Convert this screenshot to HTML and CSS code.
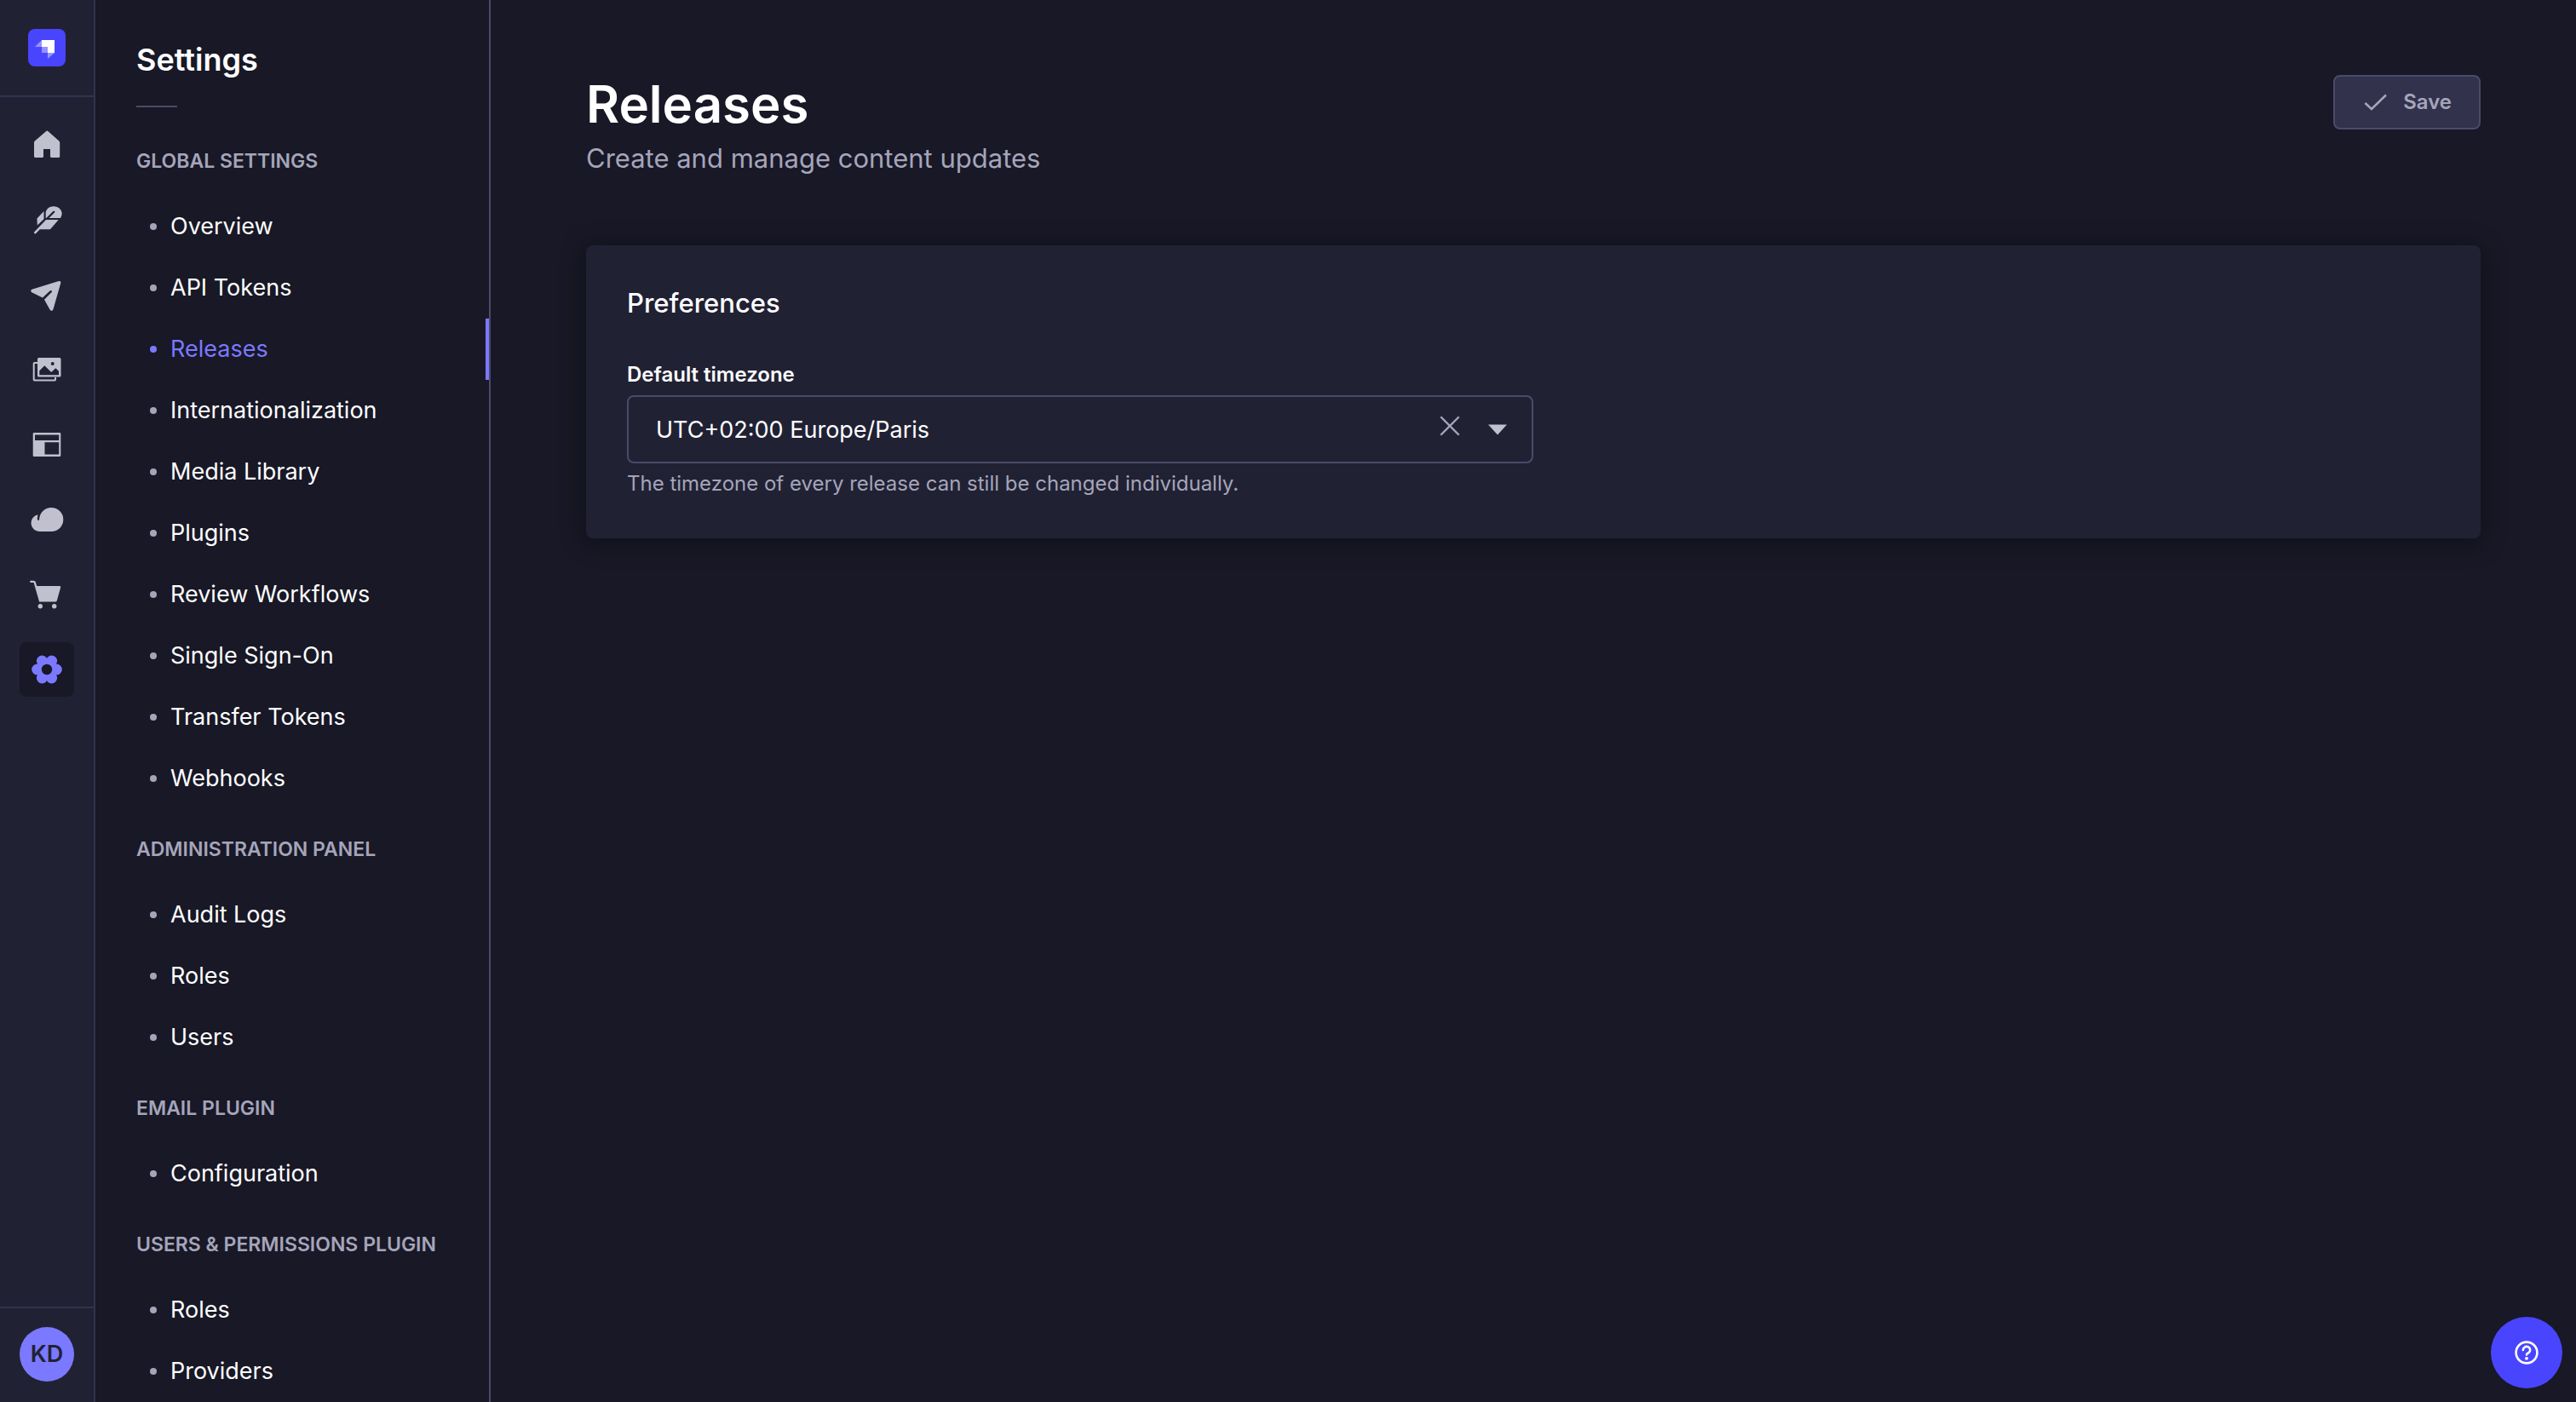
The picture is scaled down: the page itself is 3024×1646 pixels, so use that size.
FILE: index.html
```html
<!DOCTYPE html>
<html lang="en">
<head>
  <meta charset="utf-8">
  <meta name="viewport" content="width=device-width, initial-scale=1">
  <title>Releases - Settings</title>
  <link rel="stylesheet" href="styles.css">
</head>
<body>
  <div class="app">
    <nav class="rail" aria-label="Main">
      <div class="rail-brand">
        <a class="logo" href="#" aria-label="Dashboard">
          <svg viewBox="0 0 44 44" aria-hidden="true">
            <rect width="44" height="44" rx="8" fill="#4945ff"/>
            <path d="M16 13h15v15h-8v-7h-7z" fill="#fff"/>
            <path d="M16 21h7v7h-7z" fill="#9593ff"/>
            <path d="M16 13v8H8zM23 28h8l-8 7z" fill="#9593ff"/>
          </svg>
        </a>
      </div>
      <ul class="rail-list">
        <li><a class="rail-link" href="#" aria-label="Home">
          <svg viewBox="0 0 40 40" aria-hidden="true"><path d="M19 4.200q1.300-1.200 2.600 0L34.300 15.600q.9.900.9 2V33.500q0 1.500-1.500 1.500H25.500q-1.500 0-1.500-1.500V25H16v8.500q0 1.500-1.500 1.500H6.500Q5 35 5 33.500V17.600q0-1.100.9-2z"/></svg>
        </a></li>
        <li><a class="rail-link" href="#" aria-label="Content Manager">
          <svg viewBox="0 0 40 40" aria-hidden="true">
            <path d="M8.500 18.500 16.500 10v9.200L8.800 26.500zM18.700 18V10.500A10 10 0 0 1 37.700 12q0 3.500-1.700 6H22.500l6.500-6.500a1 1 0 0 0-1.600-1.600L19 18.300zM19 20H33.700L24 31.300H11.800L7.200 35.900A1.200 1.200 0 0 1 5.300 34.200z"/>
          </svg>
        </a></li>
        <li><a class="rail-link" href="#" aria-label="Releases">
          <svg viewBox="0 0 40 40" aria-hidden="true"><path d="M2.500 13.800 34 4.100q2.800-.6 2.300 2.200L27.500 37q-1.500 3.500-4 .5L17 25.700l8.700-8.700a1.300 1.300 0 0 0-1.800-1.800L15 23.500 2.300 17.200q-2.300-2 .2-3.400z"/></svg>
        </a></li>
        <li><a class="rail-link" href="#" aria-label="Media Library">
          <svg viewBox="0 0 40 40" aria-hidden="true">
            <path class="line" d="M9 12H5.500q-.8 0-.8.800V31.700q0 .8.800.8H29.200q.8 0 .8-.8V29" stroke-width="2"/>
            <path fill-rule="evenodd" d="M10.500 6H35q1.500 0 1.500 1.500V27q0 1.500-1.500 1.500H10.500Q9 28.500 9 27V7.500Q9 6 10.500 6zM11.300 26.300H34V21.700l-3.700-3.500L25.200 23 17.300 15.200l-6 6zM26.700 11a2 2 0 1 0 0 4 2 2 0 0 0 0-4z"/>
          </svg>
        </a></li>
        <li><a class="rail-link" href="#" aria-label="Content-Type Builder">
          <svg viewBox="0 0 40 40" aria-hidden="true"><path fill-rule="evenodd" d="M5 6H35q1.300 0 1.300 1.300V32.700q0 1.300-1.300 1.300H5q-1.300 0-1.300-1.300V7.300Q3.700 6 5 6zM6 8.500V15H34.200V8.500zM17.500 17.200V31.600H34.200V17.200z"/></svg>
        </a></li>
        <li><a class="rail-link" href="#" aria-label="Cloud">
          <svg viewBox="0 0 40 40" aria-hidden="true"><path d="M25.300 6A14 14 0 0 1 25.300 34H11A10 10 0 0 1 9.500 14.200Q8.800 17 8.900 19.800a1.100 1.100 0 0 0 2.200 0A14 14 0 0 1 25.300 6z"/></svg>
        </a></li>
        <li><a class="rail-link" href="#" aria-label="Marketplace">
          <svg viewBox="0 0 40 40" aria-hidden="true">
            <path class="line" d="M1.200 4.800H4.500q1 0 1.300 1L12 27.500" stroke-width="2.300" stroke-linecap="round"/>
            <path d="M7 10H35q1.600 0 1.200 1.600L31.900 27q-.5 1.600-2 1.600H13.500q-1.600 0-2-1.600z"/>
            <circle cx="12.300" cy="33.700" r="2.700"/><circle cx="28.700" cy="33.700" r="2.700"/>
          </svg>
        </a></li>
        <li><a class="rail-link rail-link-active" href="#" aria-label="Settings" aria-current="page">
          <svg viewBox="0 0 40 40" aria-hidden="true">
            <circle cx="20" cy="20" r="12.500"/>
            <circle cx="31.300" cy="20" r="6.500"/><circle cx="8.700" cy="20" r="6.500"/>
            <circle cx="25.600" cy="10" r="6.500"/><circle cx="14.400" cy="10" r="6.500"/>
            <circle cx="25.600" cy="30" r="6.500"/><circle cx="14.400" cy="30" r="6.500"/>
            <circle class="gear-hole" cx="20" cy="20" r="6.200"/>
          </svg>
        </a></li>
      </ul>
      <div class="rail-user">
        <button class="avatar" type="button" aria-label="KD, user menu">KD</button>
      </div>
    </nav>

    <nav class="subnav" aria-label="Settings">
      <h2 class="subnav-title">Settings</h2>
      <hr class="subnav-rule">
      <section class="group">
        <h3 class="group-title">Global settings</h3>
        <ul class="group-list">
          <li><a class="item" href="#">Overview</a></li>
          <li><a class="item" href="#">API Tokens</a></li>
          <li><a class="item item-active" href="#" aria-current="page">Releases</a></li>
          <li><a class="item" href="#">Internationalization</a></li>
          <li><a class="item" href="#">Media Library</a></li>
          <li><a class="item" href="#">Plugins</a></li>
          <li><a class="item" href="#">Review Workflows</a></li>
          <li><a class="item" href="#">Single Sign-On</a></li>
          <li><a class="item" href="#">Transfer Tokens</a></li>
          <li><a class="item" href="#">Webhooks</a></li>
        </ul>
      </section>
      <section class="group">
        <h3 class="group-title">Administration panel</h3>
        <ul class="group-list">
          <li><a class="item" href="#">Audit Logs</a></li>
          <li><a class="item" href="#">Roles</a></li>
          <li><a class="item" href="#">Users</a></li>
        </ul>
      </section>
      <section class="group">
        <h3 class="group-title">Email plugin</h3>
        <ul class="group-list">
          <li><a class="item" href="#">Configuration</a></li>
        </ul>
      </section>
      <section class="group">
        <h3 class="group-title">Users &amp; Permissions plugin</h3>
        <ul class="group-list">
          <li><a class="item" href="#">Roles</a></li>
          <li><a class="item" href="#">Providers</a></li>
        </ul>
      </section>
    </nav>

    <main class="main">
      <header class="page-header">
        <div>
          <h1 class="page-title">Releases</h1>
          <p class="page-subtitle">Create and manage content updates</p>
        </div>
        <button class="save" type="submit" form="preferences" disabled>
          <svg viewBox="0 0 28 20" aria-hidden="true"><path class="line" d="M1.500 11 9 18 26 1.500" stroke-width="2.600"/></svg>
          Save
        </button>
      </header>

      <form class="card" id="preferences">
        <h2 class="card-title">Preferences</h2>
        <div class="field">
          <label class="field-label" for="timezone">Default timezone</label>
          <div class="combo">
            <input class="combo-input" id="timezone" type="text" role="combobox" aria-expanded="false" aria-describedby="timezone-hint" value="UTC+02:00 Europe/Paris">
            <button class="combo-button combo-clear" type="button" aria-label="Clear">
              <svg viewBox="0 0 24 24" aria-hidden="true"><path class="line" d="M2 2 22 22M22 2 2 22" stroke-width="2.400" stroke-linecap="round"/></svg>
            </button>
            <button class="combo-button combo-toggle" type="button" aria-label="Show options">
              <svg viewBox="0 0 24 24" aria-hidden="true"><path d="M1 6.500H23L12 18.500z"/></svg>
            </button>
          </div>
          <p class="field-hint" id="timezone-hint">The timezone of every release can still be changed individually.</p>
        </div>
      </form>
    </main>
  </div>

  <button class="help" type="button" aria-label="Help">
    <svg viewBox="0 0 28 28" aria-hidden="true">
      <circle class="line" cx="14" cy="14" r="12.400" stroke-width="2.600"/>
      <path class="line" d="M9.800 11A4.200 4 0 1 1 16.300 14.300Q14 15.300 14 16.500" stroke-width="2.600" stroke-linecap="round"/>
      <circle cx="14" cy="20.800" r="1.900"/>
    </svg>
  </button>
</body>
</html>
```
FILE: styles.css
```css
:root {
  --surface: #212134;
  --background: #181826;
  --border: #32324d;
  --border-strong: #4a4a6a;
  --text: #ffffff;
  --text-muted: #a5a5ba;
  --icon: #c0c0cf;
  --accent: #7b79ff;
  --accent-strong: #4945ff;
}

* {
  box-sizing: border-box;
}

body {
  margin: 0;
  background: var(--background);
  color: var(--text);
  font-family: Inter, "Liberation Sans", sans-serif;
  font-size: 27px;
  line-height: 40px;
}

h1,
h2,
h3,
p,
ul {
  margin: 0;
  padding: 0;
}

ul {
  list-style: none;
}

a {
  color: inherit;
  text-decoration: none;
}

button {
  padding: 0;
  border: 0;
  font: inherit;
  cursor: pointer;
}

svg {
  display: block;
  fill: currentColor;
}

.line {
  fill: none;
  stroke: currentColor;
}

.app {
  display: flex;
  height: 100vh;
}

/* Icon rail */

.rail {
  display: flex;
  flex: none;
  flex-direction: column;
  width: 112px;
  background: var(--surface);
  border-right: 2px solid var(--border);
}

.rail-brand {
  display: flex;
  justify-content: center;
  padding: 34px 0;
  border-bottom: 2px solid var(--border);
}

.logo {
  width: 44px;
  height: 44px;
}

.rail-list {
  display: flex;
  flex: 1;
  flex-direction: column;
  align-items: center;
  gap: 24px;
  padding-top: 24px;
}

.rail-link {
  display: grid;
  place-items: center;
  width: 64px;
  height: 64px;
  border-radius: 8px;
  color: var(--icon);
}

.rail-link svg {
  width: 40px;
  height: 40px;
}

.rail-link-active {
  background: var(--background);
  color: var(--accent);
}

.gear-hole {
  fill: var(--background);
}

.rail-user {
  display: flex;
  justify-content: center;
  padding: 22px 0 24px;
  border-top: 2px solid var(--border);
}

.avatar {
  width: 64px;
  height: 64px;
  border-radius: 50%;
  background: var(--accent);
  color: var(--surface);
  font-weight: 600;
}

/* Settings navigation */

.subnav {
  flex: none;
  width: 464px;
  padding-top: 48px;
  overflow: hidden;
  border-right: 2px solid var(--border-strong);
}

.subnav-title {
  padding-left: 48px;
  font-size: 36px;
  font-weight: 600;
  line-height: 44px;
}

.subnav-rule {
  width: 48px;
  height: 2px;
  margin: 32px 0 16px 48px;
  border: 0;
  background: var(--border-strong);
}

.group {
  padding-top: 32px;
}

.group-title {
  padding: 0 0 26px 48px;
  color: var(--text-muted);
  font-size: 23px;
  font-weight: 600;
  line-height: 30px;
  text-transform: uppercase;
}

.item {
  display: flex;
  align-items: center;
  gap: 16px;
  height: 72px;
  padding-left: 64px;
}

.item::before {
  width: 8px;
  height: 8px;
  border-radius: 50%;
  background: var(--text-muted);
  content: "";
}

.item-active {
  border-right: 4px solid var(--accent);
  color: var(--accent);
}

.item-active::before {
  background: var(--accent);
}

/* Page */

.main {
  flex: 1;
  min-width: 0;
  padding: 80px 112px;
  overflow: auto;
}

.page-header {
  display: flex;
  align-items: flex-start;
  justify-content: space-between;
  margin-bottom: 80px;
}

.page-title {
  font-size: 60px;
  font-weight: 600;
  line-height: 84px;
}

.page-subtitle {
  color: var(--text-muted);
  font-size: 31px;
  line-height: 44px;
}

.save {
  display: flex;
  align-items: center;
  gap: 18px;
  height: 64px;
  margin-top: 8px;
  padding: 0 32px 0 34px;
  border: 2px solid var(--border-strong);
  border-radius: 8px;
  background: var(--border);
  color: var(--text-muted);
  font-size: 24px;
  font-weight: 600;
}

.save svg {
  width: 28px;
  height: 20px;
}

.card {
  padding: 48px;
  border-radius: 8px;
  background: var(--surface);
  box-shadow: 0 4px 30px rgba(3, 3, 5, 0.35);
}

.card-title {
  margin-bottom: 48px;
  font-size: 31px;
  font-weight: 500;
  line-height: 40px;
}

.field {
  width: 50%;
}

.field-label {
  display: block;
  margin-bottom: 8px;
  font-size: 24px;
  font-weight: 600;
  line-height: 32px;
}

.combo {
  display: flex;
  align-items: center;
  gap: 32px;
  height: 80px;
  padding-right: 28px;
  border: 2px solid var(--border-strong);
  border-radius: 8px;
}

.combo-input {
  flex: 1;
  min-width: 0;
  height: 100%;
  padding: 0 0 0 32px;
  border: 0;
  outline: 0;
  background: transparent;
  color: inherit;
  font: inherit;
}

.combo-button {
  background: transparent;
  color: var(--icon);
}

.combo-button svg {
  width: 24px;
  height: 24px;
}

.combo-clear {
  padding-bottom: 8px;
  color: var(--text-muted);
}

.field-hint {
  padding-top: 8px;
  color: var(--text-muted);
  font-size: 24px;
  line-height: 32px;
}

/* Floating help button */

.help {
  position: fixed;
  right: 16px;
  bottom: 16px;
  display: grid;
  place-items: center;
  width: 84px;
  height: 84px;
  border-radius: 50%;
  background: var(--accent-strong);
  color: var(--text);
}

.help svg {
  width: 28px;
  height: 28px;
}
```
